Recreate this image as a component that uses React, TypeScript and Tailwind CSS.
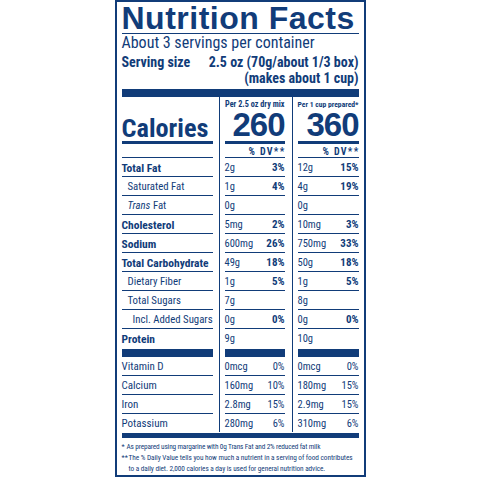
const navy = "text-[#113c79]";

type Row = {
  label: React.ReactNode;
  bold?: boolean;
  indent?: number;
  a: [string, string];
  b: [string, string];
};

const nutrients: Row[] = [
  { label: "Total Fat", bold: true, a: ["2g", "3%"], b: ["12g", "15%"] },
  { label: "Saturated Fat", indent: 1, a: ["1g", "4%"], b: ["4g", "19%"] },
  {
    label: (
      <>
        <span className="italic">Trans</span> Fat
      </>
    ),
    indent: 1,
    a: ["0g", ""],
    b: ["0g", ""],
  },
  { label: "Cholesterol", bold: true, a: ["5mg", "2%"], b: ["10mg", "3%"] },
  { label: "Sodium", bold: true, a: ["600mg", "26%"], b: ["750mg", "33%"] },
  { label: "Total Carbohydrate", bold: true, a: ["49g", "18%"], b: ["50g", "18%"] },
  { label: "Dietary Fiber", indent: 1, a: ["1g", "5%"], b: ["1g", "5%"] },
  { label: "Total Sugars", indent: 1, a: ["7g", ""], b: ["8g", ""] },
  { label: "Incl. Added Sugars", indent: 2, a: ["0g", "0%"], b: ["0g", "0%"] },
  { label: "Protein", bold: true, a: ["9g", ""], b: ["10g", ""] },
];

const vitamins: Row[] = [
  { label: "Vitamin D", a: ["0mcg", "0%"], b: ["0mcg", "0%"] },
  { label: "Calcium", a: ["160mg", "10%"], b: ["180mg", "15%"] },
  { label: "Iron", a: ["2.8mg", "15%"], b: ["2.9mg", "15%"] },
  { label: "Potassium", a: ["280mg", "6%"], b: ["310mg", "6%"] },
];

function rowClass(i: number, list: Row[], last: string) {
  const isLast = i === list.length - 1;
  return isLast ? last : "h-[19px] border-b border-[#113c79]";
}

function LabelColumn() {
  return (
    <div className="w-[91px] flex flex-col whitespace-nowrap">
      <div className="h-[47px] border-b-[3px] border-[#113c79] flex items-end">
        <span className="text-[26.3px] leading-[26px] font-bold">Calories</span>
      </div>
      <div className="h-[14px] border-b border-[#113c79]" />
      {nutrients.map((r, i) => (
        <div
          key={i}
          className={`${rowClass(i, nutrients, "h-[20px]")} pt-[1px] leading-[18px] ${
            r.bold ? "font-bold text-[11.5px]" : "text-[10.8px]"
          } ${r.indent === 1 ? "pl-[6px]" : r.indent === 2 ? "pl-[11px]" : ""}`}
        >
          {r.label}
        </div>
      ))}
      <div className="h-[8px] bg-[#113c79]" />
      {vitamins.map((r, i) => (
        <div
          key={i}
          className={`${rowClass(i, vitamins, "h-[18px]")} pt-[1px] text-[11px] leading-[18px]`}
        >
          {r.label}
        </div>
      ))}
    </div>
  );
}

function ValueColumn({
  head,
  headSize,
  cal,
  pick,
  width,
  gap,
}: {
  head: string;
  headSize: string;
  cal: string;
  pick: "a" | "b";
  width: string;
  gap: string;
}) {
  return (
    <div className={`${gap} border-l border-[#113c79] pl-[5px]`}>
      <div className={`${width} flex flex-col whitespace-nowrap`}>
        <div className="h-[47px] border-b-[3px] border-[#113c79] pt-[3px] text-right">
          <div className={`${headSize} leading-[9px] font-bold`}>{head}</div>
          <div className="mt-[1px] text-[33px] leading-[30px] font-bold tracking-[-1px] font-['Liberation_Sans',sans-serif]">
            {cal}
          </div>
        </div>
        <div className="h-[14px] border-b border-[#113c79] flex items-end justify-end">
          <span className="text-[10px] leading-[10px] font-bold tracking-[1.3px] -mr-[1px]">
            % DV**
          </span>
        </div>
        {nutrients.map((r, i) => (
          <div
            key={i}
            className={`${rowClass(i, nutrients, "h-[20px]")} pt-[1px] text-[10.5px] leading-[18px] flex justify-between`}
          >
            <span>{r[pick][0]}</span>
            <span className="font-bold text-[11px]">{r[pick][1]}</span>
          </div>
        ))}
        <div className="h-[8px] bg-[#113c79]" />
        {vitamins.map((r, i) => (
          <div
            key={i}
            className={`${rowClass(i, vitamins, "h-[18px]")} pt-[1px] text-[10.5px] leading-[18px] flex justify-between`}
          >
            <span>{r[pick][0]}</span>
            <span>{r[pick][1]}</span>
          </div>
        ))}
      </div>
    </div>
  );
}

export default function App() {
  return (
    <div className="min-h-screen bg-white flex justify-center">
      <div
        className={`w-[251px] h-[477px] border-2 border-[#113c79] px-[5px] ${navy} font-['Roboto_Condensed','Liberation_Sans',sans-serif]`}
      >
        <div className="h-[32px] border-b border-[#113c79] pt-[2px]">
          <h1 className="text-[32px] leading-[29px] font-bold tracking-[0.5px] whitespace-nowrap font-['Liberation_Sans',sans-serif]">
            Nutrition Facts
          </h1>
        </div>
        <p className="mt-[1px] text-[16px] leading-[15px] whitespace-nowrap">
          About 3 servings per container
        </p>
        <div className="mt-[5px] flex justify-between text-[14px] leading-[14px] font-bold whitespace-nowrap">
          <span>Serving size</span>
          <span>2.5 oz (70g/about 1/3 box)</span>
        </div>
        <div className="mt-[2px] text-right text-[14px] leading-[14px] font-bold">
          (makes about 1 cup)
        </div>
        <div className="mt-[4px] h-[8px] bg-[#113c79]" />

        <div className="flex">
          <LabelColumn />
          <ValueColumn
            head="Per 2.5 oz dry mix"
            headSize="text-[8.2px]"
            cal="260"
            pick="a"
            width="w-[60px]"
            gap="ml-[6px]"
          />
          <ValueColumn
            head="Per 1 cup prepared*"
            headSize="text-[7.6px]"
            cal="360"
            pick="b"
            width="w-[61px]"
            gap="ml-[7px]"
          />
        </div>
        <div className="mt-[1px] h-[5px] bg-[#113c79]" />

        <div className="mt-[3px] text-[7.3px] leading-[11px] whitespace-nowrap">
          <div className="flex tracking-[-0.15px]">
            <span className="w-[5px] shrink-0">*</span>
            <span>As prepared using margarine with 0g Trans Fat and 2% reduced fat milk</span>
          </div>
          <div className="flex">
            <span className="w-[7px] shrink-0">**</span>
            <span>
              <span className="tracking-[-0.05px]">
                The % Daily Value tells you how much a nutrient in a serving of food contributes
              </span>
              <br />
              <span className="tracking-[-0.08px]">
                to a daily diet. 2,000 calories a day is used for general nutrition advice.
              </span>
            </span>
          </div>
        </div>
      </div>
    </div>
  );
}
